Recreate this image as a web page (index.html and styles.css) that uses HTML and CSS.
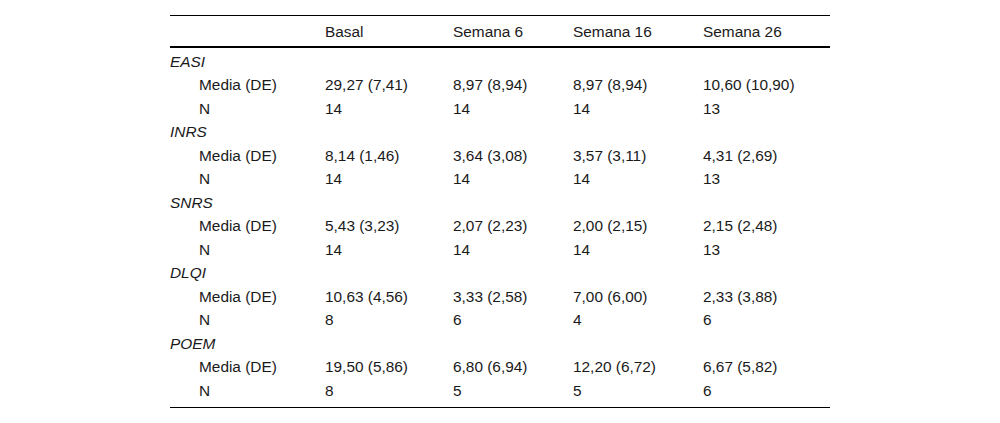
FILE: index.html
```html
<!DOCTYPE html>
<html lang="es">
<head>
<meta charset="utf-8">
<link rel="stylesheet" href="styles.css">
</head>
<body>
<div class="tbl">
  <div class="row head">
    <div></div><div>Basal</div><div>Semana 6</div><div>Semana 16</div><div>Semana 26</div>
  </div>
  <div class="body">
    <div class="row"><div class="grp">EASI</div></div>
    <div class="row"><div class="ind">Media (DE)</div><div>29,27 (7,41)</div><div>8,97 (8,94)</div><div>8,97 (8,94)</div><div>10,60 (10,90)</div></div>
    <div class="row"><div class="ind">N</div><div>14</div><div>14</div><div>14</div><div>13</div></div>
    <div class="row"><div class="grp">INRS</div></div>
    <div class="row"><div class="ind">Media (DE)</div><div>8,14 (1,46)</div><div>3,64 (3,08)</div><div>3,57 (3,11)</div><div>4,31 (2,69)</div></div>
    <div class="row"><div class="ind">N</div><div>14</div><div>14</div><div>14</div><div>13</div></div>
    <div class="row"><div class="grp">SNRS</div></div>
    <div class="row"><div class="ind">Media (DE)</div><div>5,43 (3,23)</div><div>2,07 (2,23)</div><div>2,00 (2,15)</div><div>2,15 (2,48)</div></div>
    <div class="row"><div class="ind">N</div><div>14</div><div>14</div><div>14</div><div>13</div></div>
    <div class="row"><div class="grp">DLQI</div></div>
    <div class="row"><div class="ind">Media (DE)</div><div>10,63 (4,56)</div><div>3,33 (2,58)</div><div>7,00 (6,00)</div><div>2,33 (3,88)</div></div>
    <div class="row"><div class="ind">N</div><div>8</div><div>6</div><div>4</div><div>6</div></div>
    <div class="row"><div class="grp">POEM</div></div>
    <div class="row"><div class="ind">Media (DE)</div><div>19,50 (5,86)</div><div>6,80 (6,94)</div><div>12,20 (6,72)</div><div>6,67 (5,82)</div></div>
    <div class="row"><div class="ind">N</div><div>8</div><div>5</div><div>5</div><div>6</div></div>
  </div>
</div>
</body>
</html>
```
FILE: styles.css
```css
html, body {
  margin: 0;
  padding: 0;
  background: #fff;
}
body {
  font-family: "Liberation Sans", Arial, sans-serif;
  font-size: 15.4px;
  color: #1a1a1a;
}
.tbl {
  margin: 15px 0 0 170px;
  width: 660px;
  border-top: 1px solid #000;
  border-bottom: 1px solid #000;
}
.row {
  display: grid;
  grid-template-columns: 155px 128px 120px 130px 127px;
  height: 23.5px;
  align-items: center;
  white-space: nowrap;
}
.head {
  box-sizing: border-box;
  height: 32px;
  padding-top: 2px;
  border-bottom: 2px solid #000;
}
.body {
  padding: 2px 0 4px;
}
.grp {
  font-style: italic;
  grid-column: 1 / -1;
}
.ind {
  padding-left: 29px;
}
```
